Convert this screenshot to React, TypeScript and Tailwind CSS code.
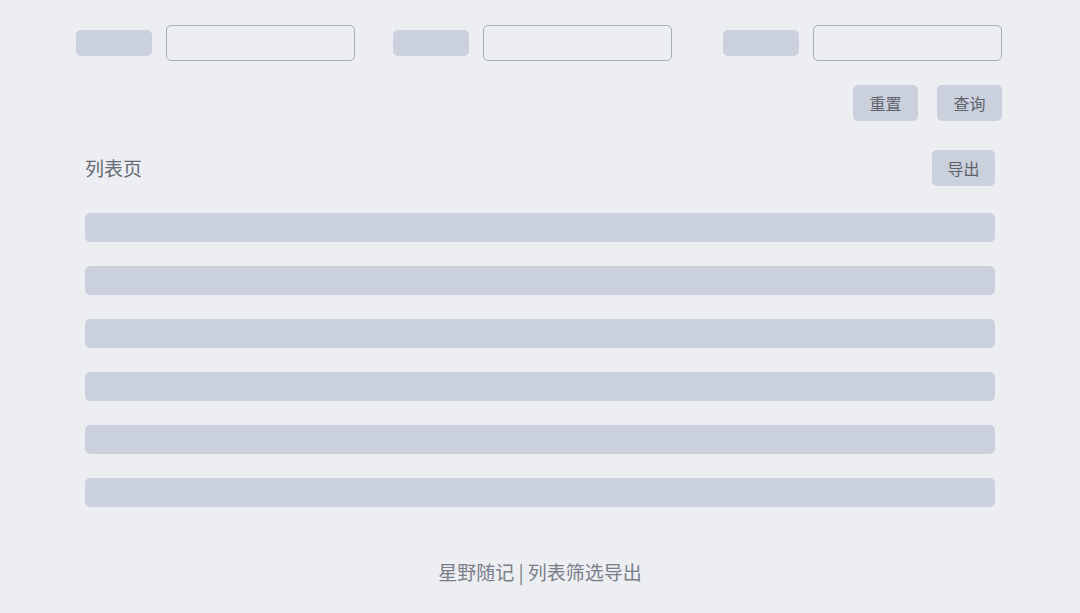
const font = { fontFamily: '"Noto Sans CJK SC", "Noto Sans", sans-serif' };

function Field() {
  return (
    <div className="flex items-center gap-[14px]">
      <div className="h-[26px] w-[76px] rounded-[5px] bg-[#cbd1dc]" />
      <div className="h-[36px] w-[189px] rounded-[5px] border border-[#a9afbc] bg-[#eceef2]" />
    </div>
  );
}

export default function App() {
  const rows = [0, 1, 2, 3, 4, 5];
  return (
    <div className="min-h-[613px] w-full bg-[#eceef2]" style={font}>
      {/* filter bar */}
      <div className="flex items-center pl-[76px] pt-[25px]">
        <Field />
        <div className="w-[38px]" />
        <Field />
        <div className="w-[51px]" />
        <Field />
      </div>
      <div className="mt-[24px] flex justify-end gap-[19px] pr-[78px]">
        <button className="h-[36px] w-[65px] rounded-[5px] bg-[#cbd1dc] text-[16px] text-[#5e626d]">重置</button>
        <button className="h-[36px] w-[65px] rounded-[5px] bg-[#cbd1dc] text-[16px] text-[#5e626d]">查询</button>
      </div>

      {/* list */}
      <div className="mt-[29px] px-[85px]">
        <div className="flex items-center justify-between">
          <span className="text-[19px] text-[#666a75]">列表页</span>
          <button className="h-[36px] w-[63px] rounded-[5px] bg-[#cbd1dc] text-[16px] text-[#5e626d]">导出</button>
        </div>
        <div className="mt-[27px] flex flex-col gap-[24px]">
          {rows.map((r) => (
            <div key={r} className="h-[29px] rounded-[5px] bg-[#cbd1dc]" />
          ))}
        </div>
      </div>

      <div className="mt-[52px] text-center text-[19px] leading-[26px] text-[#7a7e89]">星野随记 | 列表筛选导出</div>
    </div>
  );
}
